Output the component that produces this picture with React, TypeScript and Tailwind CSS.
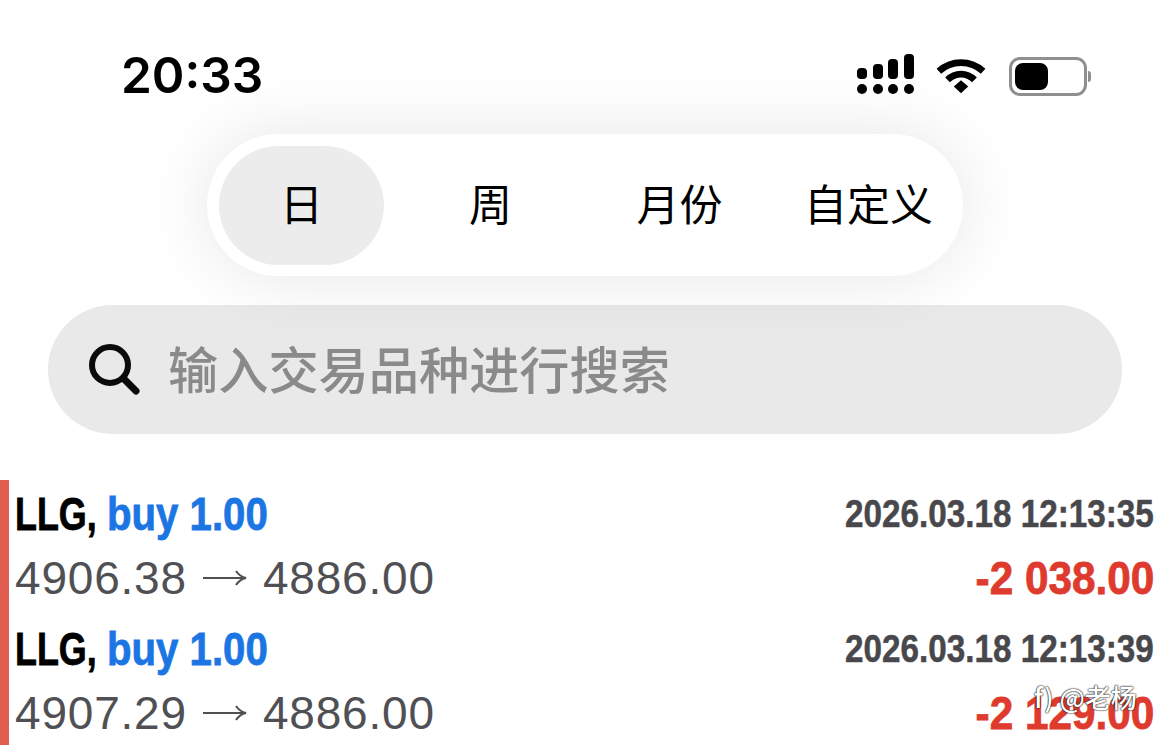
const tabs = ['日', '周', '月份', '自定义']

const deals = [
  { open: '4906.38', close: '4886.00', time: '2026.03.18 12:13:35', profit: '-2 038.00' },
  { open: '4907.29', close: '4886.00', time: '2026.03.18 12:13:39', profit: '-2 129.00' },
]

const cjk = "font-['Noto_Sans_CJK_SC',sans-serif]"
const helv = "font-['Liberation_Sans',sans-serif]"

const Signal = () => (
  <svg width="60" height="44" viewBox="0 0 60 44" fill="#000">
    <rect x="1" y="14" width="10" height="11" rx="4" />
    <rect x="17" y="10" width="10" height="15" rx="4" />
    <rect x="32" y="5" width="10" height="20" rx="4" />
    <rect x="48" y="0" width="10" height="25" rx="4" />
    <circle cx="6" cy="35" r="5" />
    <circle cx="22" cy="35" r="5" />
    <circle cx="37" cy="35" r="5" />
    <circle cx="53" cy="35" r="5" />
  </svg>
)

const Wifi = () => (
  <svg width="50" height="40" viewBox="0 0 52 40" fill="none" stroke="#000" strokeWidth="7">
    <path d="M3 15 C16 3 36 3 49 15" />
    <path d="M12 24 C20 16 32 16 40 24" />
    <path d="M18.5 31 L26 24.5 L33.5 31 L26 38 Z" fill="#000" stroke="none" />
  </svg>
)

const Battery = () => (
  <div className="flex items-center">
    <div className="flex h-[39px] w-[78px] items-center rounded-[11px] border-[3px] border-[#8f8f8f] bg-white p-[3px]">
      <div className="h-[27px] w-[33px] rounded-[8px] bg-black" />
    </div>
    <div className="ml-[1px] h-[11px] w-[3px] rounded-r-full bg-[#8f8f8f]" />
  </div>
)

const SearchIcon = () => (
  <svg width="52" height="52" viewBox="0 0 52 52" fill="none" stroke="#0a0a0a" strokeWidth="6" strokeLinecap="round">
    <circle cx="22" cy="21" r="18" />
    <path d="M36 35 L48 47" strokeWidth="7" />
  </svg>
)

const Arrow = () => (
  <svg width="44" height="20" viewBox="0 0 44 20" fill="none" stroke="#505054" strokeWidth="2" className="mx-[16px] inline-block align-[6px]">
    <path d="M0 10 H42" />
    <path d="M33 3 C35 6 38 9 43 10 C38 11 35 14 33 17" />
  </svg>
)

export default function App() {
  return (
    <div className="relative h-[745px] w-[1170px] overflow-hidden bg-white">
      {/* status bar */}
      <div className="flex h-[134px] items-start justify-between pl-[121px] pr-[79px] pt-[46px]">
        <span className="font-['Inter',sans-serif] text-[49.5px] font-semibold leading-[58px] text-black">20:33</span>
        <div className="flex items-center gap-[20px] pt-[8px]">
          <Signal />
          <Wifi />
          <div className="ml-[3px]">
            <Battery />
          </div>
        </div>
      </div>

      {/* period tabs */}
      <div className="flex justify-center">
        <div className="grid h-[142px] w-[756px] grid-cols-4 items-center rounded-[71px] bg-white shadow-[0_0_70px_rgba(0,0,0,0.1)]">
          {tabs.map((tab, i) => (
            <div key={tab} className="flex justify-center">
              <div
                className={`flex h-[119px] w-[165px] items-center justify-center whitespace-nowrap rounded-[60px] pb-[6px] ${cjk} text-[43px] text-black ${
                  i === 0 ? 'bg-[#ececec]' : ''
                }`}
              >
                {tab}
              </div>
            </div>
          ))}
        </div>
      </div>

      {/* search */}
      <div className="mx-[48px] mt-[29px] flex h-[129px] items-center rounded-[65px] bg-[#e9e9e9] pl-[40px]">
        <SearchIcon />
        <span className={`ml-[28px] pb-[4px] ${cjk} text-[50.2px] font-medium leading-none text-[#8a8a8a]`}>输入交易品种进行搜索</span>
      </div>

      {/* deals */}
      <div className="mt-[46px] border-l-[9px] border-[#e05d50] pl-[6px] pr-[16px]">
        {deals.map((d) => (
          <div key={d.time} className={`${helv} h-[135px]`}>
            <div className="flex h-[67px] items-center justify-between">
              <span className="whitespace-nowrap text-[46px] font-bold leading-none text-black">
                <span className="mr-[-13px] inline-block origin-left scale-x-[0.78] [-webkit-text-stroke:0.8px_#000]">LLG,</span>
                <span className="inline-block origin-left scale-x-[0.873] text-[#1b76e3] [-webkit-text-stroke:0.8px_#1b76e3]">buy 1.00</span>
              </span>
              <span className="origin-right scale-x-[0.875] whitespace-nowrap text-[38px] font-bold leading-none text-[#48484c] [-webkit-text-stroke:0.5px_#48484c]">
                {d.time}
              </span>
            </div>
            <div className="-mt-[5px] flex h-[72px] items-center justify-between">
              <span className="flex items-center whitespace-nowrap text-[46px] leading-none tracking-[0.8px] text-[#505054]">
                {d.open}
                <Arrow />
                {d.close}
              </span>
              <span className="origin-right scale-x-[0.92] whitespace-nowrap text-[46px] font-bold leading-none text-[#de3b2e] [-webkit-text-stroke:0.8px_#de3b2e]">
                {d.profit}
              </span>
            </div>
          </div>
        ))}
      </div>

      {/* watermark */}
      <div className="absolute left-[1034px] top-[680px] whitespace-nowrap font-['Noto_Sans_CJK_SC',sans-serif] text-[26px] font-medium leading-[34px] text-white [text-shadow:0_0_2px_#000,0_0_1px_#000]">
        f) @老杨
      </div>
    </div>
  )
}
